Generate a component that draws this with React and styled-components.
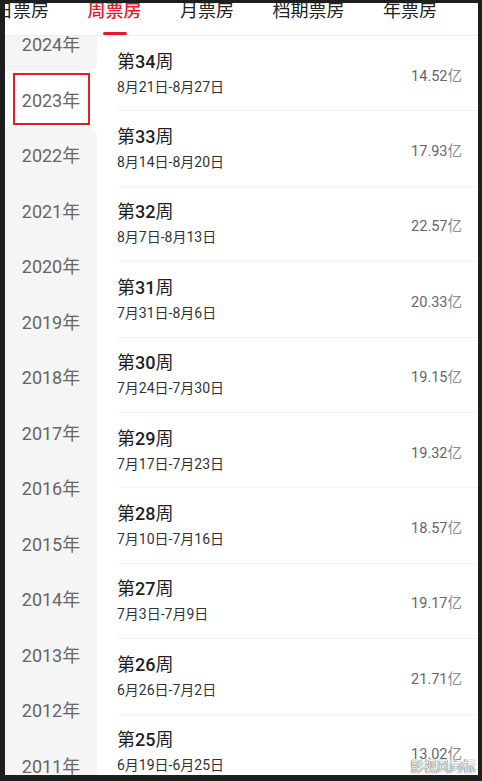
import styled, { createGlobalStyle } from "styled-components";

const GlobalStyle = createGlobalStyle`
    body {
        margin: 0;
        background: #1e1e1e;
        font-family: Roboto, "Noto Sans CJK SC", sans-serif;
    }
`;

const Screen = styled.div`
    position: relative;
    margin: 3px 4px 0 5px;
    width: 473px;
    height: 772px;
    background: #ffffff;
    overflow: hidden;
`;

const TabBar = styled.div`
    height: 32px;
    border-bottom: 1px solid #efefef;
    overflow: hidden;
`;

const TabStrip = styled.div`
    display: flex;
    gap: 38.5px;
    margin-left: -10px;
`;

const Tab = styled.div`
    display: flex;
    flex-direction: column;
    align-items: center;
    justify-content: space-between;
    flex-shrink: 0;
    font-size: 18px;
    line-height: 18px;
    margin-top: -1px;
    height: 33px;
    color: ${(p) => (p.$active ? "#e5192b" : "#222")};
    font-weight: ${(p) => (p.$active ? 500 : 400)};
    white-space: nowrap;
`;

const Underline = styled.span`
    width: 24px;
    height: 3px;
    border-radius: 2px;
    background: ${(p) => (p.$show ? "#e5192b" : "transparent")};
`;

const Body = styled.div`
    display: flex;
    height: 739px;
    overflow: hidden;
`;

const Sidebar = styled.div`
    width: 92px;
    flex-shrink: 0;
    background: #ffffff;
`;

const YearList = styled.div`
    margin-top: -20.5px;
`;

const Year = styled.div`
    height: 55.5px;
    display: flex;
    align-items: center;
    justify-content: center;
    font-size: 18px;
    color: #666;
    background: ${(p) => (p.$selected ? "#ffffff" : "#f5f5f5")};
    border-bottom-right-radius: ${(p) => (p.$before ? "10px" : "0")};
    border-top-right-radius: ${(p) => (p.$after ? "10px" : "0")};
`;

const WeekList = styled.div`
    flex: 1;
    min-width: 0;
`;

const WeekRow = styled.div`
    height: 75.4px;
    box-sizing: border-box;
    margin-left: 20px;
    padding-right: 16px;
    display: flex;
    align-items: center;
    justify-content: space-between;
    border-bottom: 1px solid #f2f2f2;
`;

const WeekInfo = styled.div`
    display: flex;
    flex-direction: column;
    gap: 3px;
`;

const WeekTitle = styled.div`
    font-size: 18px;
    line-height: 24px;
    font-weight: 400;
    color: #1f1f1f;
`;

const WeekNo = styled.span`
    font-weight: 500;
`;

const WeekDates = styled.div`
    font-size: 14px;
    line-height: 20px;
    color: #333;
`;

const BoxOffice = styled.div`
    font-size: 14.5px;
    color: #666;
    margin-top: 2px;
`;

const Unit = styled.span`
    color: #8a8a8a;
`;

const Highlight = styled.div`
    position: absolute;
    left: 8px;
    top: 70px;
    width: 77px;
    height: 52px;
    box-sizing: border-box;
    border: 2px solid #e31e24;
`;

const Watermark = styled.div`
    position: absolute;
    right: 3px;
    bottom: 0;
    font-size: 13.5px;
    font-family: "Noto Sans CJK SC", sans-serif;
    color: #f6f6f6;
    text-shadow: 0 0 1px #555, 0 0 1px #555;
    letter-spacing: -0.5px;
`;

const tabs = ["日票房", "周票房", "月票房", "档期票房", "年票房"];

const years = [2024, 2023, 2022, 2021, 2020, 2019, 2018, 2017, 2016, 2015, 2014, 2013, 2012, 2011];

const weeks = [
    { no: 34, range: "8月21日-8月27日", total: "14.52" },
    { no: 33, range: "8月14日-8月20日", total: "17.93" },
    { no: 32, range: "8月7日-8月13日", total: "22.57" },
    { no: 31, range: "7月31日-8月6日", total: "20.33" },
    { no: 30, range: "7月24日-7月30日", total: "19.15" },
    { no: 29, range: "7月17日-7月23日", total: "19.32" },
    { no: 28, range: "7月10日-7月16日", total: "18.57" },
    { no: 27, range: "7月3日-7月9日", total: "19.17" },
    { no: 26, range: "6月26日-7月2日", total: "21.71" },
    { no: 25, range: "6月19日-6月25日", total: "13.02" },
];

const App = () => {
    const activeTab = "周票房";
    const selectedYear = 2023;
    const selIndex = years.indexOf(selectedYear);

    return (
        <>
            <GlobalStyle />
            <Screen>
                <TabBar>
                    <TabStrip>
                        {tabs.map((t) => (
                            <Tab key={t} $active={t === activeTab}>
                                {t}
                                <Underline $show={t === activeTab} />
                            </Tab>
                        ))}
                    </TabStrip>
                </TabBar>
                <Body>
                    <Sidebar>
                        <YearList>
                            {years.map((y, i) => (
                                <Year
                                    key={y}
                                    $selected={i === selIndex}
                                    $before={i === selIndex - 1}
                                    $after={i === selIndex + 1}
                                >
                                    {y}年
                                </Year>
                            ))}
                        </YearList>
                    </Sidebar>
                    <WeekList>
                        {weeks.map((w) => (
                            <WeekRow key={w.no}>
                                <WeekInfo>
                                    <WeekTitle>
                                        第<WeekNo>{w.no}</WeekNo>周
                                    </WeekTitle>
                                    <WeekDates>{w.range}</WeekDates>
                                </WeekInfo>
                                <BoxOffice>
                                    {w.total}
                                    <Unit>亿</Unit>
                                </BoxOffice>
                            </WeekRow>
                        ))}
                    </WeekList>
                </Body>
                <Highlight />
                <Watermark>影视风向标</Watermark>
            </Screen>
        </>
    );
};

export default App;
